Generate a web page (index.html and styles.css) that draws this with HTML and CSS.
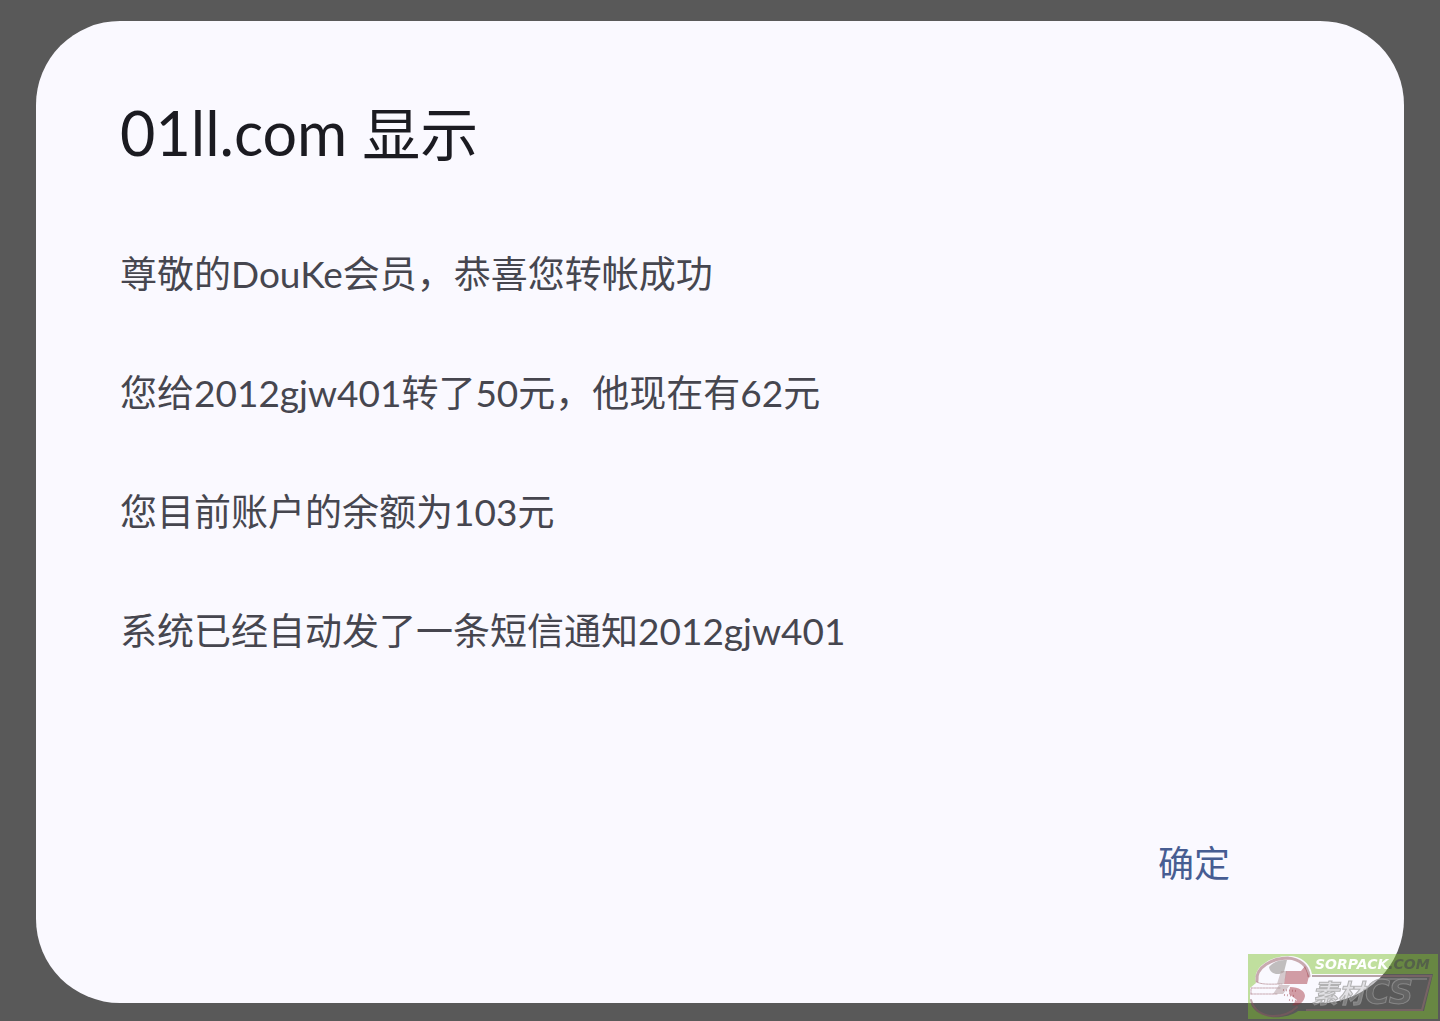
FILE: index.html
```html
<!DOCTYPE html>
<html lang="zh-CN">
<head>
    <meta charset="UTF-8">
    <meta name="viewport" content="width=device-width, initial-scale=1">
    <title>01ll.com 显示</title>
    <link rel="stylesheet" href="styles.css">
</head>
<body>
    <div class="dialog" role="alertdialog" aria-labelledby="title" aria-describedby="message">
        <h1 class="title" id="title"><span class="site">01ll.com</span> 显示</h1>
        <div class="message" id="message">
            <p>尊敬的DouKe会员，恭喜您转帐成功</p>
            <p>您给2012gjw401转了50元，他现在有62元</p>
            <p>您目前账户的余额为103元</p>
            <p>系统已经自动发了一条短信通知2012gjw401</p>
        </div>
        <div class="actions">
            <button type="button" class="button">确定</button>
        </div>
    </div>
    <svg class="watermark" viewBox="0 0 190 65" role="img" aria-label="SORPACK.COM 素材CS">
        <!-- green plate, open behind the ball and the name bar -->
        <path fill="#7bbe28" fill-opacity=".45" fill-rule="evenodd" d="M0 0H190V65H0Z M41 2C53 2 62 9 64 20H185L176 57H50C43 62 33 64 23 63C11 61 3 55 2 46V34L8 29C4 14 21 2 41 2Z"/>
        <!-- ball -->
        <g fill="none" stroke-linecap="round">
            <path stroke="#8c4a50" stroke-opacity=".45" stroke-width="3" d="M9 27C7 13 25 4 40 4C52 5 60 12 61 22"/>
            <path stroke="#8b5a60" stroke-opacity=".5" stroke-width="2" d="M3 46C6 57 15 62 25 62C35 62 44 58 49 53"/>
            <path stroke="#8c4a50" stroke-opacity=".45" stroke-width="1" stroke-dasharray="2 1" d="M9 28C14 31 25 30 34 30M3 40V34H33M3 40H30"/>
        </g>
        <path fill="#69645c" fill-opacity=".4" d="M21 13C26 7 32 6 39 6L36 18C30 22 22 20 21 13Z"/>
        <path fill="#a02a38" fill-opacity=".45" d="M38 17H53L57 12L61 22L59 30H36Z"/>
        <path fill="#a02a38" fill-opacity=".45" d="M42 33C51 33 57 37 57 42C56 49 49 53 44 51L49 46L41 40Z"/>
        <path fill="#b09a9c" fill-opacity=".5" d="M33 17H39L36 30H29Z M31 31H42L35 40H25Z"/>
        <path fill="none" stroke="#a04a54" stroke-opacity=".5" stroke-width="2" stroke-dasharray="1 2" d="M35 36L49 37M36 41L47 42M41 46L49 47"/>
        <!-- name bar -->
        <path fill="none" stroke="#8c6a6e" stroke-opacity=".6" stroke-width="2" d="M64 22H183L174 56H58"/>
        <path fill="none" stroke="#ffffff" stroke-opacity=".35" stroke-width="1" d="M66 25H179"/>
        <text class="mark-site" x="67" y="15">SORPACK<tspan class="mark-com">.COM</tspan></text>
        <text class="mark-name" x="64" y="49">素材</text>
        <text class="mark-cs" x="117" y="50">CS</text>
    </svg>
</body>
</html>
```
FILE: styles.css
```css
* {
    box-sizing: border-box;
}
body {
    margin: 0;
    padding: 21px 36px 18px;
    min-height: 100vh;
    display: flex;
    background-color: #595959;
    font-family: Lato, "Noto Sans CJK SC", sans-serif;
}
.dialog {
    flex: 1;
    display: flex;
    flex-direction: column;
    padding: 72px 84px 98px;
    border-radius: 84px;
    background-color: #faf9ff;
}
.title {
    margin: 0 0 70px;
    color: #1b1b21;
    font-size: 58px;
    font-weight: 400;
    line-height: 80px;
}
.site {
    font-size: 61px;
}
.message {
    color: #46464f;
    font-size: 37px;
    line-height: 59px;
}
.message p {
    margin: 0 0 60px;
}
.message p:last-child {
    margin-bottom: 0;
}
.actions {
    display: flex;
    justify-content: flex-end;
    margin-top: auto;
    padding-right: 54px;
}
.button {
    padding: 12px 36px;
    border: none;
    border-radius: 42px;
    background-color: transparent;
    color: #475d92;
    font-family: inherit;
    font-size: 36px;
    line-height: 60px;
    cursor: pointer;
}
.watermark {
    position: fixed;
    right: 2px;
    bottom: 2px;
    width: 190px;
    height: 65px;
}
.mark-site {
    fill: #ffffff;
    font-family: "DejaVu Sans", sans-serif;
    font-size: 14px;
    font-style: italic;
    font-weight: 700;
}
.mark-com {
    fill: #55614a;
}
.mark-name,
.mark-cs {
    fill: #bbbbbb;
    fill-opacity: .4;
    stroke: #999999;
    stroke-opacity: .7;
    stroke-width: 1px;
    font-size: 26px;
    font-style: italic;
    font-weight: 700;
}
.mark-cs {
    fill: #777777;
    font-family: "DejaVu Sans", sans-serif;
    font-size: 34px;
}
```
